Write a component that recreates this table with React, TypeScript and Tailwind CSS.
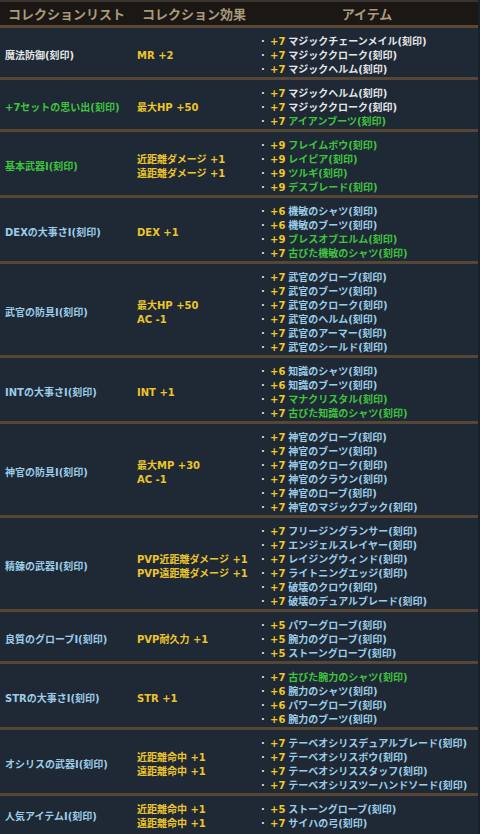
import React from "react";

type Item = { plus: string; name: string; c: "w" | "b" | "g" };
type Row = { name: string; nc: "w" | "b" | "g"; effects: string[]; items: Item[] };

const col: Record<string, string> = {
  w: "text-[#e4e6e8]",
  b: "text-[#9ccde8]",
  g: "text-[#3fc43f]",
};

const it = (plus: string, name: string, c: "w" | "b" | "g" = "b"): Item => ({ plus, name, c });

const rows: Row[] = [
  {
    name: "魔法防御(刻印)",
    nc: "w",
    effects: ["MR +2"],
    items: [it("+7", "マジックチェーンメイル(刻印)", "w"), it("+7", "マジッククローク(刻印)", "w"), it("+7", "マジックヘルム(刻印)", "w")],
  },
  {
    name: "+7セットの思い出(刻印)",
    nc: "g",
    effects: ["最大HP +50"],
    items: [it("+7", "マジックヘルム(刻印)", "w"), it("+7", "マジッククローク(刻印)", "w"), it("+7", "アイアンブーツ(刻印)", "g")],
  },
  {
    name: "基本武器Ⅰ(刻印)",
    nc: "g",
    effects: ["近距離ダメージ +1", "遠距離ダメージ +1"],
    items: [it("+9", "フレイムボウ(刻印)", "g"), it("+9", "レイピア(刻印)", "g"), it("+9", "ツルギ(刻印)", "g"), it("+9", "デスブレード(刻印)", "g")],
  },
  {
    name: "DEXの大事さⅠ(刻印)",
    nc: "b",
    effects: ["DEX +1"],
    items: [it("+6", "機敏のシャツ(刻印)"), it("+6", "機敏のブーツ(刻印)"), it("+9", "ブレスオブエルム(刻印)", "g"), it("+7", "古びた機敏のシャツ(刻印)", "g")],
  },
  {
    name: "武官の防具Ⅰ(刻印)",
    nc: "b",
    effects: ["最大HP +50", "AC -1"],
    items: [
      it("+7", "武官のグローブ(刻印)"),
      it("+7", "武官のブーツ(刻印)"),
      it("+7", "武官のクローク(刻印)"),
      it("+7", "武官のヘルム(刻印)"),
      it("+7", "武官のアーマー(刻印)"),
      it("+7", "武官のシールド(刻印)"),
    ],
  },
  {
    name: "INTの大事さⅠ(刻印)",
    nc: "b",
    effects: ["INT +1"],
    items: [it("+6", "知識のシャツ(刻印)"), it("+6", "知識のブーツ(刻印)"), it("+7", "マナクリスタル(刻印)", "g"), it("+7", "古びた知識のシャツ(刻印)", "g")],
  },
  {
    name: "神官の防具Ⅰ(刻印)",
    nc: "b",
    effects: ["最大MP +30", "AC -1"],
    items: [
      it("+7", "神官のグローブ(刻印)"),
      it("+7", "神官のブーツ(刻印)"),
      it("+7", "神官のクローク(刻印)"),
      it("+7", "神官のクラウン(刻印)"),
      it("+7", "神官のローブ(刻印)"),
      it("+7", "神官のマジックブック(刻印)"),
    ],
  },
  {
    name: "精錬の武器Ⅰ(刻印)",
    nc: "b",
    effects: ["PVP近距離ダメージ +1", "PVP遠距離ダメージ +1"],
    items: [
      it("+7", "フリージングランサー(刻印)"),
      it("+7", "エンジェルスレイヤー(刻印)"),
      it("+7", "レイジングウィンド(刻印)"),
      it("+7", "ライトニングエッジ(刻印)"),
      it("+7", "破壊のクロウ(刻印)"),
      it("+7", "破壊のデュアルブレード(刻印)"),
    ],
  },
  {
    name: "良質のグローブⅠ(刻印)",
    nc: "b",
    effects: ["PVP耐久力 +1"],
    items: [it("+5", "パワーグローブ(刻印)"), it("+5", "腕力のグローブ(刻印)"), it("+5", "ストーングローブ(刻印)")],
  },
  {
    name: "STRの大事さⅠ(刻印)",
    nc: "b",
    effects: ["STR +1"],
    items: [it("+7", "古びた腕力のシャツ(刻印)", "g"), it("+6", "腕力のシャツ(刻印)"), it("+6", "パワーグローブ(刻印)"), it("+6", "腕力のブーツ(刻印)")],
  },
  {
    name: "オシリスの武器Ⅰ(刻印)",
    nc: "b",
    effects: ["近距離命中 +1", "遠距離命中 +1"],
    items: [
      it("+7", "テーベオシリスデュアルブレード(刻印)"),
      it("+7", "テーベオシリスボウ(刻印)"),
      it("+7", "テーベオシリススタッフ(刻印)"),
      it("+7", "テーベオシリスツーハンドソード(刻印)"),
    ],
  },
  {
    name: "人気アイテムⅠ(刻印)",
    nc: "b",
    effects: ["近距離命中 +1", "遠距離命中 +1"],
    items: [it("+5", "ストーングローブ(刻印)"), it("+7", "サイハの弓(刻印)")],
  },
];

export default function App() {
  return (
    <div
      className="w-[480px] h-[834px] overflow-hidden bg-[#1f2935] border-r-2 border-[#19202a] font-bold text-[10px] leading-[14px]"
      style={{ fontFamily: '"DejaVu Sans", "Noto Sans CJK JP", sans-serif' }}
    >
      <div
        className="border-t-2 border-[#3a332e] bg-[#1b1714] h-[28px] grid grid-cols-[130px_126px_1fr] items-center text-[13px] text-[#a99a7b] border-b-[3px] border-b-[#5a4835]"
        style={{ fontFamily: '"Noto Sans CJK JP", sans-serif' }}
      >
        <div className="pl-[8px]">コレクションリスト</div>
        <div className="pl-[12px]">コレクション効果</div>
        <div className="text-center">アイテム</div>
      </div>
      {rows.map((r, i) => (
        <div
          key={i}
          className={
            "grid grid-cols-[130px_126px_1fr] " +
            (i > 0 ? "border-t-[3px] border-[#574633]" : "")
          }
        >
          <div className={"flex items-center pl-[5px] pt-[7px] " + col[r.nc]}>{r.name}</div>
          <div className="flex flex-col justify-center pl-[7px] pt-[7px] text-[#ecc52a]">
            {r.effects.map((e, j) => (
              <div key={j}>{e}</div>
            ))}
          </div>
          <div className="pt-[7px] pb-0 pl-[5px]">
            {r.items.map((x, j) => (
              <div key={j} className="flex whitespace-nowrap">
                <span className="text-[#d8d8d8] w-[9px]">·</span>
                <span className="text-[#f2c81e] mr-[3px]">{x.plus}</span>
                <span className={col[x.c]}>{x.name}</span>
              </div>
            ))}
          </div>
        </div>
      ))}
    </div>
  );
}
